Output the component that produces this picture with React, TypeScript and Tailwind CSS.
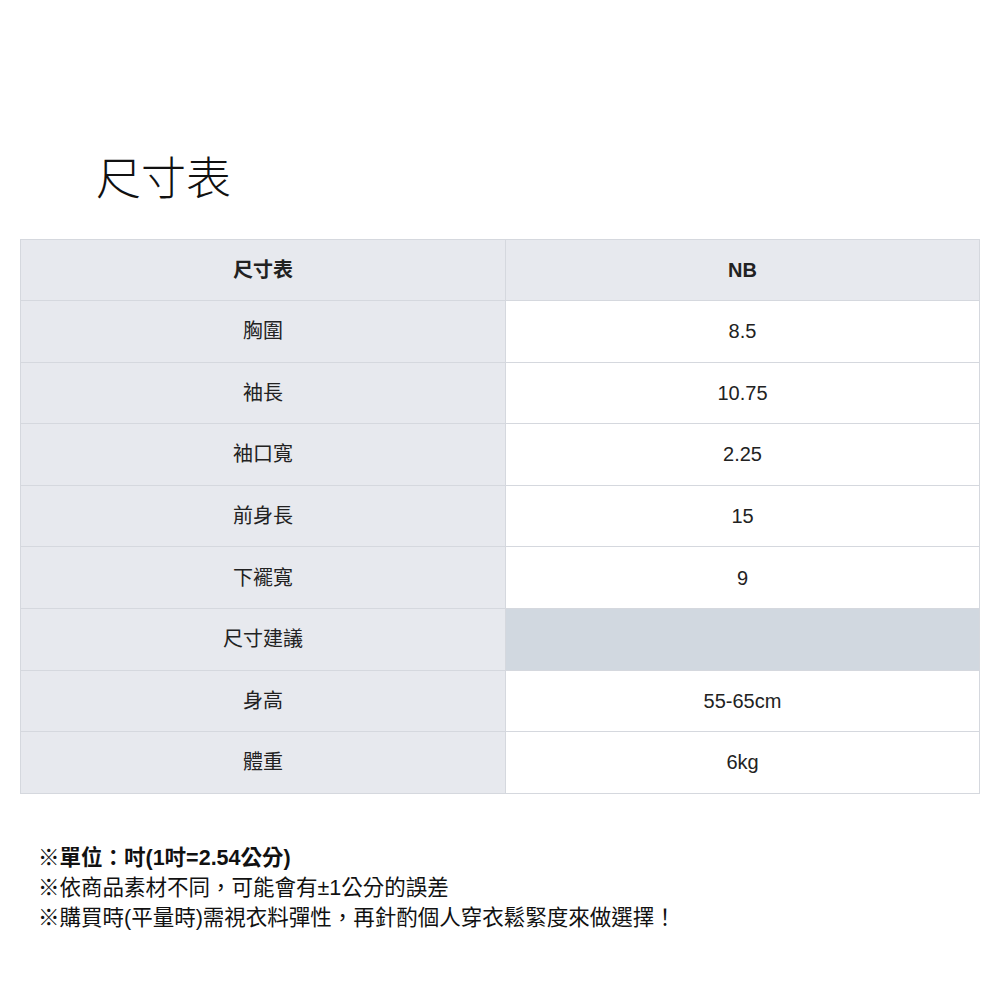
import React from "react";

const rows: { label: string; value: string; gray?: boolean }[] = [
  { label: "胸圍", value: "8.5" },
  { label: "袖長", value: "10.75" },
  { label: "袖口寬", value: "2.25" },
  { label: "前身長", value: "15" },
  { label: "下襬寬", value: "9" },
  { label: "尺寸建議", value: "", gray: true },
  { label: "身高", value: "55-65cm" },
  { label: "體重", value: "6kg" },
];

export default function App() {
  return (
    <div
      className="w-[1000px] h-[1000px] bg-white text-[#222]"
      style={{ fontFamily: '"Liberation Sans", "Noto Sans CJK TC", sans-serif' }}
    >
      <div className="pt-[150px] pl-[96px] h-[239px]">
        <h1 className="text-[45px] leading-[60px] font-light text-[#111]">尺寸表</h1>
      </div>
      <div className="px-[20px]">
        <table className="w-[960px] border-collapse table-fixed text-[20px]">
          <colgroup>
            <col className="w-[485px]" />
            <col />
          </colgroup>
          <tbody>
            <tr className="h-[61px]">
              <td className="border border-[#d5d8de] bg-[#e7e9ee] text-center font-bold">尺寸表</td>
              <td className="border border-[#d5d8de] bg-[#e7e9ee] text-center font-bold">NB</td>
            </tr>
            {rows.map((r) => (
              <tr key={r.label} className="h-[61.6px]">
                <td className="border border-[#d5d8de] bg-[#e7e9ee] text-center">{r.label}</td>
                <td
                  className={
                    r.gray
                      ? "border border-[#d5d8de] bg-[#d1d8e0] text-center"
                      : "border border-[#d5d8de] bg-white text-center"
                  }
                >
                  {r.value}
                </td>
              </tr>
            ))}
          </tbody>
        </table>
      </div>
      <div className="pl-[38px] pt-[49px] text-[21.5px] leading-[30px] text-[#111]">
        <div className="font-bold">※單位：吋(1吋=2.54公分)</div>
        <div>※依商品素材不同，可能會有±1公分的誤差</div>
        <div>※購買時(平量時)需視衣料彈性，再針酌個人穿衣鬆緊度來做選擇！</div>
      </div>
    </div>
  );
}
